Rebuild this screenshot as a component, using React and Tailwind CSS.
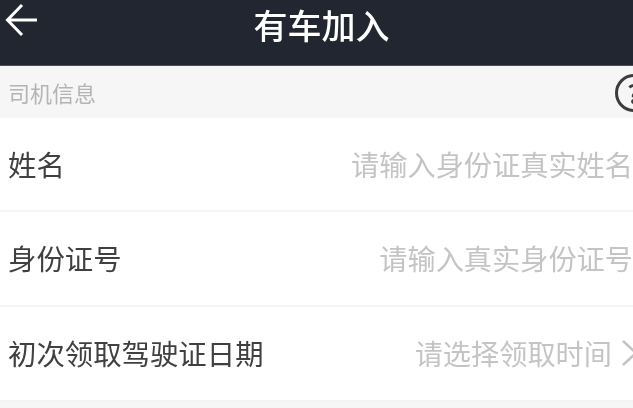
const FONT = { fontFamily: '"Noto Sans CJK SC", "Noto Sans", sans-serif' };

const Row = ({ label, placeholder, arrow, height }) => (
  <div className={`flex items-center justify-between overflow-hidden border-b-2 border-[#f4f4f4] pl-2 ${height}`}>
    <span className="text-[28.4px] leading-none text-[#404040]">{label}</span>
    <div className="flex items-center">
      <span className="whitespace-nowrap text-[28.2px] leading-none text-[#c4c4c4]">{placeholder}</span>
      {arrow && (
        <svg className="ml-[10px] -mr-[4px] h-7 w-[15px] shrink-0" viewBox="0 0 15 28" fill="none" stroke="#c4c4c4" strokeWidth="2.5">
          <path d="M1 2l13 12L1 26" />
        </svg>
      )}
    </div>
  </div>
);

export default function App() {
  return (
    <div className="h-[408px] w-[633px] overflow-hidden bg-[#f6f6f6] blur-[0.5px]" style={FONT}>
      <header className="relative flex h-[66px] items-center justify-center border-b border-[#4a4e56] bg-[#222630]">
        <svg className="absolute left-[4px] top-[3px] h-[34px] w-[34px]" viewBox="0 0 34 34" fill="none" stroke="#fff" strokeWidth="3">
          <path d="M33 17H3M18 2L3.5 17 18 32" />
        </svg>
        <h1 className="mb-[16px] ml-[10px] text-[34px] font-medium leading-none text-white">有车加入</h1>
      </header>

      <div className="flex h-[52px] items-center justify-between overflow-hidden pl-2">
        <span className="text-[22px] leading-none text-[#b4b4b4]">司机信息</span>
        <div className="-mr-[20px] mt-[2px] flex h-[38px] w-[38px] shrink-0 items-center justify-center rounded-full border-[3px] border-[#3c3c3c] text-[26px] font-bold leading-none text-[#3c3c3c]">
          ?
        </div>
      </div>

      <div className="bg-white">
        <Row label="姓名" placeholder="请输入身份证真实姓名" height="h-[94px]" />
        <Row label="身份证号" placeholder="请输入真实身份证号" height="h-[95px]" />
        <Row label="初次领取驾驶证日期" placeholder="请选择领取时间" arrow height="h-[95px] border-b-0" />
      </div>
    </div>
  );
}
